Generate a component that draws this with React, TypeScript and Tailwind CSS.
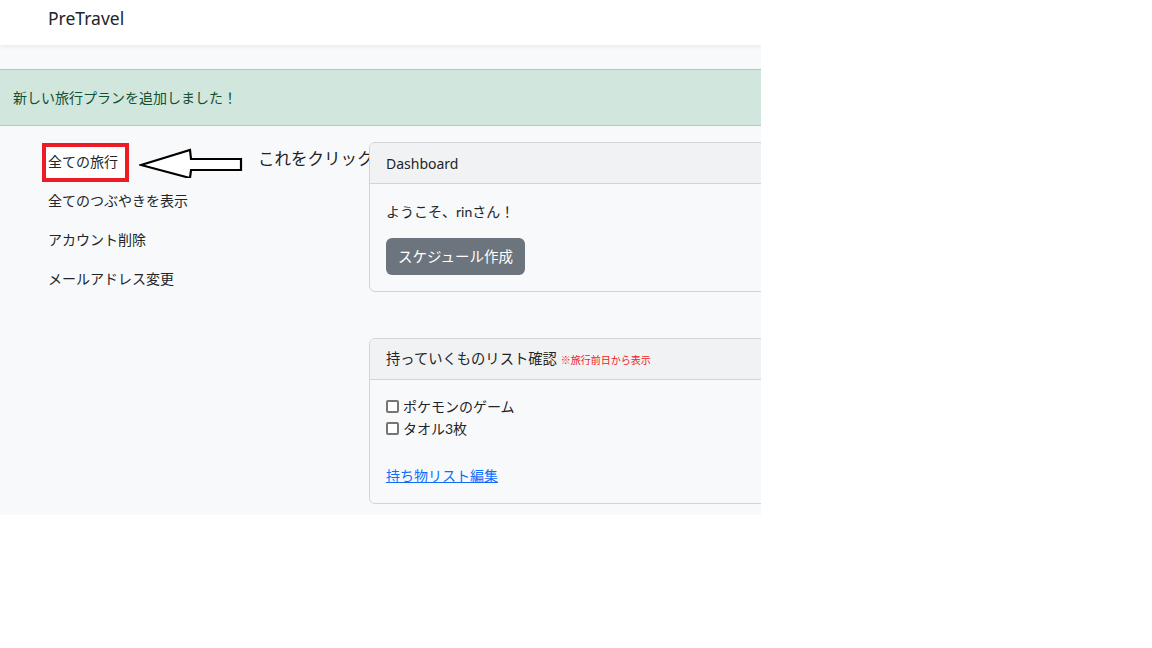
const font = 'font-["Lato","Noto_Sans_CJK_JP",sans-serif]';

const SideLink = ({label, boxed}: { label: string, boxed?: boolean }) => (
    <div className="h-[39px] flex items-center">
        {boxed ? (
            <div className="ml-[42px] h-[39px] w-[87px] border-4 border-[#ed1c24] bg-white flex items-center pl-[2px] pb-[3px]">
                <span className="text-[14px] text-[#212529]">{label}</span>
            </div>
        ) : (
            <span className="ml-[48px] pb-[2px] text-[14px] text-[#212529]">{label}</span>
        )}
    </div>
);

const Card = ({title, children}: { title: React.ReactNode, children: React.ReactNode }) => (
    <div className="relative z-10 w-[420px] border border-[#d3d4d6] rounded-[6px] bg-[#f8f9fa] overflow-hidden">
        <div className="h-[41px] bg-[#f1f2f3] border-b border-[#d3d4d6] flex items-center px-4 text-[14px] text-[#212529]">
            {title}
        </div>
        <div className="px-4 py-4">{children}</div>
    </div>
);

const Checkbox = ({label}: { label: string }) => (
    <div className="flex items-center h-[22px] text-[14px] text-[#212529]">
        <span className="w-[13px] h-[13px] border-2 border-[#767676] rounded-[2px] mr-[4px] bg-white"/>
        {label}
    </div>
);

export default function App() {
    return (
        <div className={`${font} bg-white w-[1152px] h-[648px]`}>
            <div className="w-[761px] h-[515px] overflow-hidden bg-[#f8f9fa]">
                <div className="h-[45px] bg-white shadow-[0_2px_4px_rgba(0,0,0,0.06)] flex items-center pl-[48px] pb-[8px]">
                    <span className='font-["Noto_Sans",sans-serif] text-[17.5px] text-[#212529]'>PreTravel</span>
                </div>
                <div className="pt-[24px]">
                    <div className="h-[57px] bg-[#d1e7dd] border-y border-[#a3cfbb] flex items-center pl-[13px]">
                        <span className="text-[14px] text-[#0f5132]">新しい旅行プランを追加しました！</span>
                    </div>
                </div>
                <div className="flex pt-[16px]">
                    <div className="w-[369px] shrink-0 relative">
                        <div className="pt-[1px]">
                            <SideLink label="全ての旅行" boxed/>
                            <SideLink label="全てのつぶやきを表示"/>
                            <SideLink label="アカウント削除"/>
                            <SideLink label="メールアドレス変更"/>
                        </div>
                        <svg className="absolute left-[139px] top-[4px]" width="106" height="32" viewBox="0 0 106 32">
                            <path d="M2 19 L51 4 L52 13 L102 13 L102 24 L52 24 L51 32 Z" fill="white" stroke="black"
                                  strokeWidth="2.2" strokeLinejoin="miter"/>
                        </svg>
                        <span className="absolute left-[258px] top-[5px] text-[16.5px] text-[#222] whitespace-nowrap">これをクリック</span>
                    </div>
                    <div className="flex flex-col gap-[46px] shrink-0">
                        <Card title={<span className='font-["Noto_Sans",sans-serif]'>Dashboard</span>}>
                            <div className="pt-[1px] text-[14px] text-[#212529]">ようこそ、rinさん！</div>
                            <button className="mt-[16px] h-[37px] px-3 rounded-[6px] bg-[#6c757d] text-white text-[14.5px]">
                                スケジュール作成
                            </button>
                        </Card>
                        <Card title={<>
                            <span className="text-[14.3px]">持っていくものリスト確認</span>
                            <span className="ml-[4px] text-[10px] text-[#ed1c24] pt-[3px]">※旅行前日から表示</span>
                        </>}>
                            <div className="-mt-[1px]">
                                <Checkbox label="ポケモンのゲーム"/>
                                <Checkbox label="タオル3枚"/>
                            </div>
                            <div className="mt-[24px]">
                                <a href="#" className="text-[14px] text-[#0d6efd] underline">持ち物リスト編集</a>
                            </div>
                        </Card>
                    </div>
                </div>
            </div>
        </div>
    );
}
